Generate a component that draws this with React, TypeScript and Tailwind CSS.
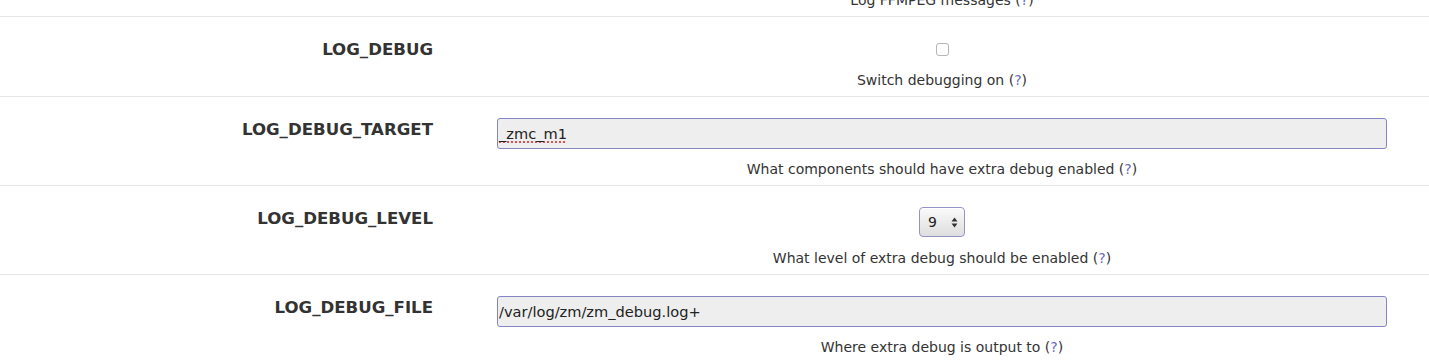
import React from 'react';

const font = "font-['DejaVu_Sans',Verdana,sans-serif]";

const Help = ({ text }: { text: string }) => (
  <div className="h-5 text-center text-[14px] leading-5 text-[#333]">
    {text} (<a className="text-[#6a6ab8]">?</a>)
  </div>
);

const TextBox = ({ value, misspelt }: { value: string; misspelt?: boolean }) => (
  <div className="flex h-[31px] w-full items-center rounded-[3px] border border-[#8585c4] bg-[#eeeeee] px-[1px] text-[14.6px] text-[#222]">
    {misspelt ? (
      <span className="underline decoration-[#e05050] decoration-dotted decoration-[1.5px] underline-offset-[3px]">
        {value}
      </span>
    ) : (
      value
    )}
  </div>
);

const Select = ({ value }: { value: string }) => (
  <div className="flex h-[30px] w-[46px] items-center justify-between rounded-[4px] border border-[#9393c8] bg-gradient-to-b from-[#fafafa] to-[#dedede] pl-[8px] pr-[6px] text-[14px] text-[#222] shadow-[inset_0_1px_0_#fff]">
    <span>{value}</span>
    <svg width="7" height="11" viewBox="0 0 7 11">
      <path d="M3.5 0.5 L6.5 4.5 H0.5 Z" fill="#333" />
      <path d="M3.5 10.5 L6.5 6.5 H0.5 Z" fill="#333" />
    </svg>
  </div>
);

const Checkbox = () => (
  <div className="flex h-[22px] items-center justify-center">
    <div className="h-[13px] w-[13px] rounded-[3px] border border-[#b5b5b5] bg-white" />
  </div>
);

const rows = [
  { name: 'LOG_DEBUG', control: <Checkbox />, help: 'Switch debugging on' },
  {
    name: 'LOG_DEBUG_TARGET',
    control: <TextBox value="_zmc_m1" misspelt />,
    help: 'What components should have extra debug enabled',
  },
  {
    name: 'LOG_DEBUG_LEVEL',
    control: (
      <div className="flex h-[31px] justify-center">
        <Select value="9" />
      </div>
    ),
    help: 'What level of extra debug should be enabled',
  },
  {
    name: 'LOG_DEBUG_FILE',
    control: <TextBox value="/var/log/zm/zm_debug.log+" />,
    help: 'Where extra debug is output to',
  },
];

export default function App() {
  return (
    <div className={`h-[361px] w-full overflow-hidden bg-white ${font}`}>
      <div className="-mt-[10px] flex border-b border-[#e6e6e6] pb-[6px]">
        <div className="w-[449px]" />
        <div className="flex-1 pl-[48px] pr-[42px]">
          <Help text="Log FFMPEG messages" />
        </div>
      </div>
      {rows.map((row) => (
        <div key={row.name} className="flex border-b border-[#e6e6e6] pb-[6px] pt-[21px]">
          <div className="w-[449px] pr-[16px] pt-[1px] text-right text-[16.6px] font-bold leading-[22px] text-[#333]">
            {row.name}
          </div>
          <div className="flex flex-1 flex-col gap-[10px] pl-[48px] pr-[42px]">
            {row.control}
            <Help text={row.help} />
          </div>
        </div>
      ))}
    </div>
  );
}
